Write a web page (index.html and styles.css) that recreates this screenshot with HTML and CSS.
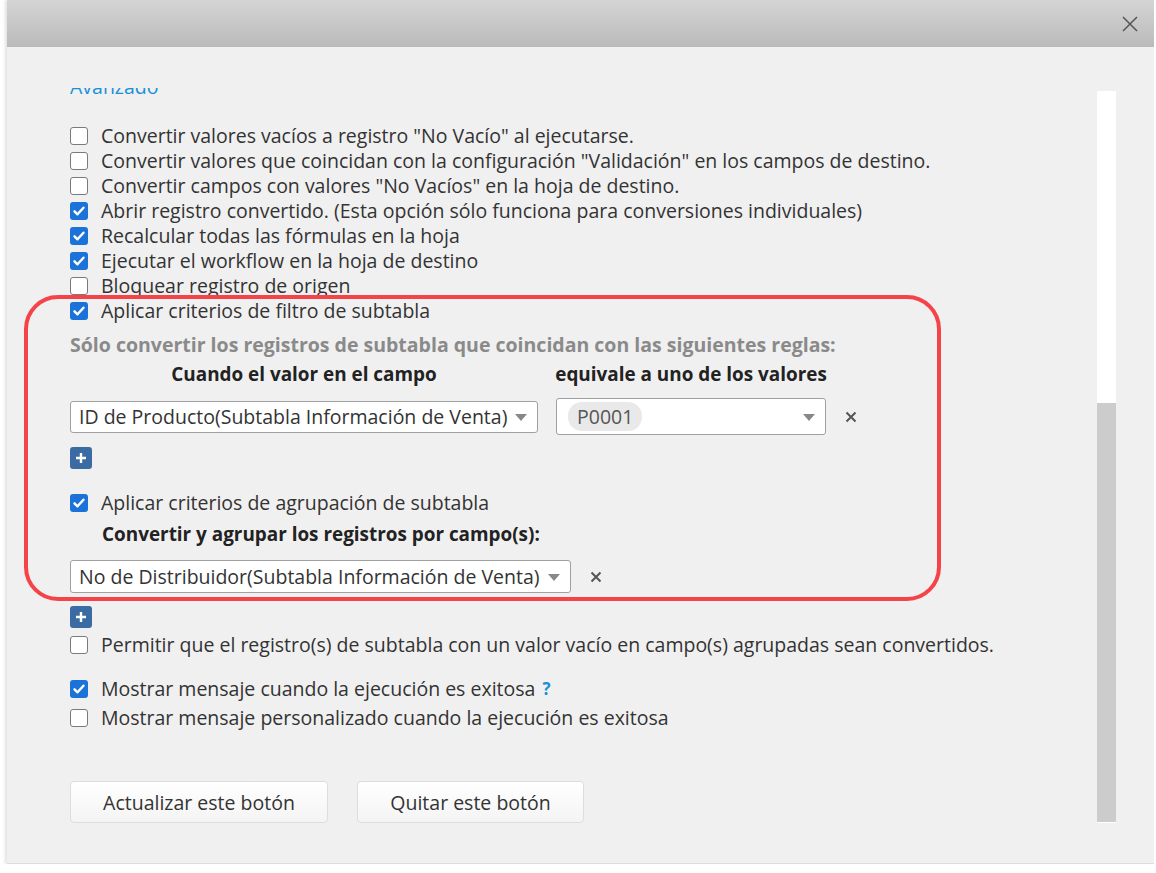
FILE: index.html
```html
<!DOCTYPE html>
<html lang="es">
<head>
  <meta charset="UTF-8" />
  <title>Configuración del botón</title>
  <link rel="stylesheet" href="styles.css">
</head>
<body>
  <div class="dialog">
    <div class="dialog-header">
      <button class="close" title="Cerrar">
        <svg width="16" height="16" viewBox="0 0 16 16"><path d="M1 1L15 15M15 1L1 15" stroke="#555" stroke-width="1.5" fill="none"/></svg>
      </button>
    </div>

    <div class="dialog-body">
      <div class="viewport">
        <div class="content">
          <div class="section-title">Avanzado</div>

          <div class="row first"><span class="box"></span>Convertir valores vacíos a registro "No Vacío" al ejecutarse.</div>
          <div class="row"><span class="box"></span>Convertir valores que coincidan con la configuración "Validación" en los campos de destino.</div>
          <div class="row"><span class="box"></span>Convertir campos con valores "No Vacíos" en la hoja de destino.</div>
          <div class="row"><span class="box on"><svg width="18" height="18" viewBox="0 0 18 18"><path d="M4.5 9.3l3 3 6-6.6" stroke="#fff" stroke-width="2.4" fill="none" stroke-linecap="round" stroke-linejoin="round"/></svg></span>Abrir registro convertido. (Esta opción sólo funciona para conversiones individuales)</div>
          <div class="row"><span class="box on"><svg width="18" height="18" viewBox="0 0 18 18"><path d="M4.5 9.3l3 3 6-6.6" stroke="#fff" stroke-width="2.4" fill="none" stroke-linecap="round" stroke-linejoin="round"/></svg></span>Recalcular todas las fórmulas en la hoja</div>
          <div class="row"><span class="box on"><svg width="18" height="18" viewBox="0 0 18 18"><path d="M4.5 9.3l3 3 6-6.6" stroke="#fff" stroke-width="2.4" fill="none" stroke-linecap="round" stroke-linejoin="round"/></svg></span>Ejecutar el workflow en la hoja de destino</div>
          <div class="row"><span class="box"></span>Bloquear registro de origen</div>
          <div class="row"><span class="box on"><svg width="18" height="18" viewBox="0 0 18 18"><path d="M4.5 9.3l3 3 6-6.6" stroke="#fff" stroke-width="2.4" fill="none" stroke-linecap="round" stroke-linejoin="round"/></svg></span>Aplicar criterios de filtro de subtabla</div>

          <div class="note">Sólo convertir los registros de subtabla que coincidan con las siguientes reglas:</div>

          <div class="rule-head">
            <div class="col-field">Cuando el valor en el campo</div>
            <div class="col-values">equivale a uno de los valores</div>
          </div>

          <div class="rule">
            <div class="select field-select">ID de Producto(Subtabla Información de Venta)<span class="arrow"></span></div>
            <div class="select values-select"><span class="chip">P0001</span><span class="arrow"></span></div>
            <span class="remove"><svg width="12" height="12" viewBox="0 0 12 12"><path d="M1.5 1.5l9 9M10.5 1.5l-9 9" stroke="#555" stroke-width="2" fill="none"/></svg></span>
          </div>

          <button class="add add-rule"><svg width="12" height="12" viewBox="0 0 12 12"><path d="M6 1v10M1 6h10" stroke="#fff" stroke-width="2.4"/></svg></button>

          <div class="row group-check"><span class="box on"><svg width="18" height="18" viewBox="0 0 18 18"><path d="M4.5 9.3l3 3 6-6.6" stroke="#fff" stroke-width="2.4" fill="none" stroke-linecap="round" stroke-linejoin="round"/></svg></span>Aplicar criterios de agrupación de subtabla</div>
          <div class="group-label">Convertir y agrupar los registros por campo(s):</div>

          <div class="rule group-rule">
            <div class="select group-select">No de Distribuidor(Subtabla Información de Venta)<span class="arrow"></span></div>
            <span class="remove"><svg width="12" height="12" viewBox="0 0 12 12"><path d="M1.5 1.5l9 9M10.5 1.5l-9 9" stroke="#555" stroke-width="2" fill="none"/></svg></span>
          </div>

          <button class="add add-group"><svg width="12" height="12" viewBox="0 0 12 12"><path d="M6 1v10M1 6h10" stroke="#fff" stroke-width="2.4"/></svg></button>

          <div class="row allow-empty"><span class="box"></span>Permitir que el registro(s) de subtabla con un valor vacío en campo(s) agrupadas sean convertidos.</div>

          <div class="row msg"><span class="box on"><svg width="18" height="18" viewBox="0 0 18 18"><path d="M4.5 9.3l3 3 6-6.6" stroke="#fff" stroke-width="2.4" fill="none" stroke-linecap="round" stroke-linejoin="round"/></svg></span>Mostrar mensaje cuando la ejecución es exitosa <span class="help">?</span></div>
          <div class="row msg-custom"><span class="box"></span>Mostrar mensaje personalizado cuando la ejecución es exitosa</div>

          <div class="actions">
            <button class="btn btn-update">Actualizar este botón</button>
            <button class="btn btn-remove">Quitar este botón</button>
          </div>

          <!-- marca roja sobre la parte de subtabla -->
          <div class="highlight"></div>
        </div>
      </div>

      <div class="scrollbar"><div class="thumb"></div></div>
    </div>
  </div>
</body>
</html>
```

FILE: styles.css
```css
body {
  margin: 0;
  background: #fff;
  font-family: "Open Sans", "Noto Sans", sans-serif;
  color: #333;
}

.dialog {
  margin-left: 7px;
  width: 1147px;
  height: 864px;
  box-sizing: border-box;
  background: #f0f0f0;
  border-bottom: 1px solid #dedede;
  box-shadow: -2px 0 3px rgba(0, 0, 0, 0.12);
  display: flex;
  flex-direction: column;
}

.dialog-header {
  height: 47px;
  flex: none;
  background: linear-gradient(#d5d5d5, #bababa);
  display: flex;
  justify-content: flex-end;
  align-items: center;
}

.close {
  border: none;
  background: none;
  padding: 0;
  margin: 0 16px 0 0;
  width: 16px;
  height: 16px;
  cursor: pointer;
}

.dialog-body {
  flex: 1;
  display: flex;
  min-height: 0;
}

.viewport {
  flex: 1;
  margin-top: 41px;
  height: 740px;
  overflow: hidden;
}

.content {
  position: relative;
  margin-top: -14px;
  padding-left: 63px;
  font-size: 19.5px;
  line-height: 25px;
}

.section-title {
  color: #1a8fd8;
}

.row {
  display: flex;
  align-items: center;
  height: 25px;
  white-space: nowrap;
}

.row.first {
  margin-top: 24px;
}

.box {
  flex: none;
  width: 18px;
  height: 18px;
  box-sizing: border-box;
  margin-right: 13px;
  border: 1.5px solid #7a7a7a;
  border-radius: 3px;
  background: #fff;
  display: flex;
}

.box.on {
  border: none;
  background: #1b73d9;
}

.note {
  margin-top: 9px;
  font-weight: bold;
  color: #8a8a8a;
}

.rule-head {
  margin-top: 5px;
  display: flex;
  gap: 18px;
  font-size: 18.9px;
  font-weight: bold;
  color: #222;
  white-space: nowrap;
}

.col-field {
  width: 468px;
  display: flex;
  justify-content: center;
}

.col-values {
  width: 270px;
  display: flex;
  justify-content: center;
}

.rule {
  margin-top: 11px;
  display: flex;
  align-items: center;
  gap: 18px;
}

.select {
  position: relative;
  box-sizing: border-box;
  background: #fff;
  border: 1px solid #a0a0a0;
  border-radius: 3px;
  display: flex;
  align-items: center;
  padding-left: 8px;
  white-space: nowrap;
}

.field-select {
  width: 468px;
  height: 32px;
}

.values-select {
  width: 270px;
  height: 37px;
  padding-left: 11px;
}

.group-select {
  width: 501px;
  height: 33px;
}

.arrow {
  position: absolute;
  right: 10px;
  top: 50%;
  margin-top: -3px;
  width: 0;
  height: 0;
  border-left: 6px solid transparent;
  border-right: 6px solid transparent;
  border-top: 7px solid #888;
}

.chip {
  background: #e9e9e9;
  color: #555;
  border-radius: 14px;
  padding: 2px 9px;
  line-height: 25px;
}

.remove {
  display: flex;
  margin-left: 1px;
}

.add {
  display: flex;
  align-items: center;
  justify-content: center;
  width: 22px;
  height: 22px;
  padding: 0;
  border: none;
  border-radius: 3px;
  background: #3a6ca3;
  cursor: pointer;
}

.add-rule {
  margin-top: 12px;
}

.group-check {
  margin-top: 21px;
}

.group-label {
  margin-top: 7px;
  padding-left: 32px;
  font-size: 18.9px;
  font-weight: bold;
  color: #222;
}

.group-rule {
  margin-top: 13px;
}

.add-group {
  margin-top: 13px;
}

.allow-empty {
  margin-top: 4px;
}

.msg {
  margin-top: 19px;
}

.msg-custom {
  margin-top: 4px;
}

.help {
  color: #1a8fd8;
  font-weight: bold;
  font-size: 17px;
  margin-left: 7px;
}

.actions {
  margin-top: 51px;
  display: flex;
  gap: 29px;
}

.btn {
  height: 42px;
  font-family: inherit;
  font-size: 19.5px;
  color: #333;
  border: 1px solid #ddd;
  border-radius: 4px;
  background: linear-gradient(#fff, #f4f4f4);
  cursor: pointer;
}

.btn-update {
  width: 258px;
}

.btn-remove {
  width: 227px;
}

.highlight {
  position: absolute;
  left: 17px;
  top: 221px;
  width: 917px;
  height: 306px;
  box-sizing: border-box;
  border: 4px solid #f5434a;
  border-radius: 34px;
  pointer-events: none;
}

.scrollbar {
  flex: none;
  width: 19px;
  height: 732px;
  margin: 44px 38px 0 0;
  background: #fff;
  display: flex;
  flex-direction: column;
}

.thumb {
  margin-top: 312px;
  height: 419px;
  background: #ccc;
}
```
